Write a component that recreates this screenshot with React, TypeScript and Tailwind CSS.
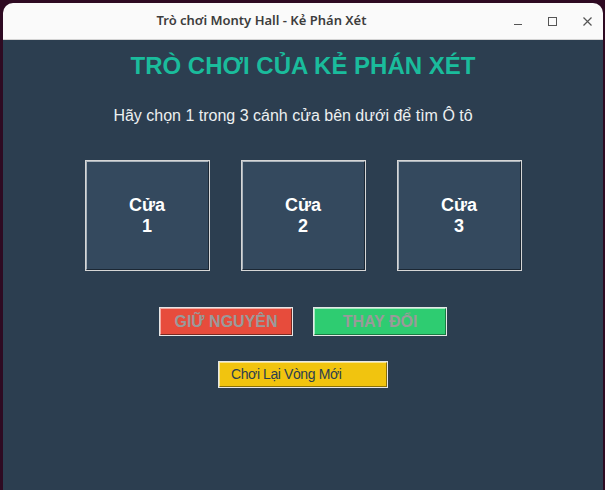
import React from "react";

const doors = [1, 2, 3];

function Door({ n }: { n: number }) {
  return (
    <button className="h-[111px] w-[125px] border border-[#d6d6d6] p-0">
      <div className="flex h-full w-full flex-col items-center justify-center border-t border-l border-b border-r border-t-[#aab4bd] border-l-[#aab4bd] border-b-[#1b2734] border-r-[#1b2734] bg-[#34495e] text-[18px] leading-[21px] font-bold text-white">
        <span>Cửa</span>
        <span>{n}</span>
      </div>
    </button>
  );
}

function ChoiceButton({ label, color, light, dark }: { label: string; color: string; light: string; dark: string }) {
  return (
    <button className="h-[29px] w-[134px] border border-[#e6e6e6] p-0">
      <div
        className={`flex h-full w-full items-center justify-center border text-[16px] font-bold text-[#9a9a9a] ${color}`}
        style={{ borderTopColor: light, borderLeftColor: light, borderBottomColor: dark, borderRightColor: dark }}
      >
        {label}
      </div>
    </button>
  );
}

export default function App() {
  return (
    <div className="h-[490px] w-[605px] overflow-hidden bg-[#2e0a22] pt-[3px] pl-[3px] font-['Liberation_Sans',Arial,sans-serif]">
      <div className="flex h-[487px] w-[600px] flex-col overflow-hidden rounded-t-[10px]">
        {/* title bar: the title is centred in the space left of the window controls */}
        <div className="relative flex h-[37px] shrink-0 items-center justify-center border-b border-[#d4d4d4] bg-[#fafafa] pr-[83px]">
          <span className="font-['Noto_Sans',sans-serif] text-[13px] font-semibold text-[#3d3d3d]">
            Trò chơi Monty Hall - Kẻ Phán Xét
          </span>
          <div className="absolute right-[11px] top-0 flex h-full items-center gap-[26px]">
            <svg width="8" height="10" viewBox="0 0 8 10">
              <line x1="0" y1="8.5" x2="8" y2="8.5" stroke="#555" strokeWidth="1" />
            </svg>
            <svg width="9" height="9" viewBox="0 0 9 9">
              <rect x="0.5" y="0.5" width="8" height="8" fill="none" stroke="#555" strokeWidth="1" />
            </svg>
            <svg width="9" height="9" viewBox="0 0 9 9">
              <path d="M0.5 0.5 L8.5 8.5 M8.5 0.5 L0.5 8.5" stroke="#555" strokeWidth="1.2" />
            </svg>
          </div>
        </div>

        {/* game area */}
        <div className="flex flex-1 flex-col items-center bg-[#2c3e50]">
          <h1 className="mt-[12px] text-[24px] leading-[28px] font-bold text-[#1abc9c]">
            TRÒ CHƠI CỦA KẺ PHÁN XÉT
          </h1>
          <p className="mt-[26px] mr-[20px] text-[16px] leading-[20px] text-[#ecf0f1]">
            Hãy chọn 1 trong 3 cánh cửa bên dưới để tìm Ô tô
          </p>

          <div className="mt-[34px] flex gap-[31px]">
            {doors.map((n) => (
              <Door key={n} n={n} />
            ))}
          </div>

          <div className="mt-[36px] flex gap-[20px]">
            <ChoiceButton label="GIỮ NGUYÊN" color="bg-[#e74c3c]" light="#f5a9a1" dark="#7a2a22" />
            <ChoiceButton label="THAY ĐỔI" color="bg-[#2ecc71]" light="#a3ebc1" dark="#1a7a43" />
          </div>

          <button className="mt-[25px] h-[27px] w-[170px] border border-[#e6e6e6] p-0">
            <div className="flex h-full w-full items-center border border-t-[#f9e58a] border-l-[#f9e58a] border-b-[#8a7006] border-r-[#8a7006] bg-[#f1c40f] pl-[11px] text-[14px] tracking-[-0.4px] text-[#2c3e50]">
              Chơi Lại Vòng Mới
            </div>
          </button>
        </div>
      </div>
    </div>
  );
}
